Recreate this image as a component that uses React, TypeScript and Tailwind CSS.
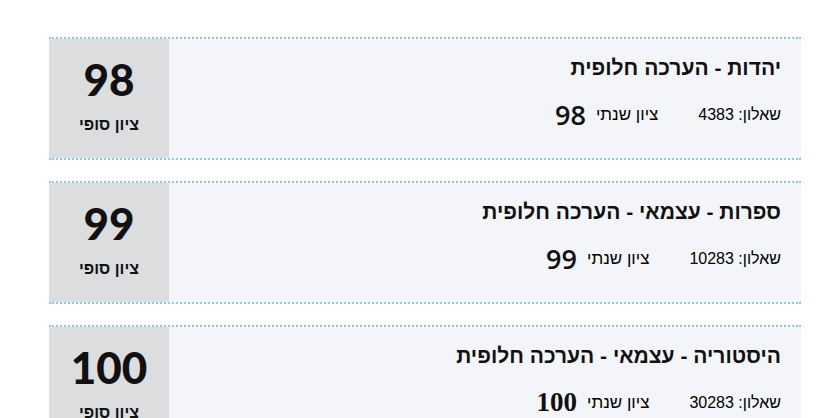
const GRADES = [
  { title: "יהדות - הערכה חלופית", exam: "4383", annual: "98", final: "98", serif: false },
  { title: "ספרות - עצמאי - הערכה חלופית", exam: "10283", annual: "99", final: "99", serif: false },
  { title: "היסטוריה - עצמאי - הערכה חלופית", exam: "30283", annual: "100", final: "100", serif: true },
];

export default function App() {
  return (
    <div
      dir="rtl"
      className="min-h-screen bg-white pt-[37px] pl-[49px] pr-[37px] text-[#111]"
      style={{ fontFamily: '"Liberation Sans", "DejaVu Sans", sans-serif' }}
    >
      <div className="flex flex-col gap-[21px]">
        {GRADES.map((g) => (
          <div
            key={g.exam}
            className="flex h-[123px] border-y-2 border-dotted border-[#8cc8f0] bg-[#f4f5f9]"
          >
            <div className="flex flex-1 flex-col pr-[20px] pt-[16px]">
              <h3 className="text-[21px] font-bold leading-[26px]">{g.title}</h3>
              <div className="mt-[20px] flex items-center gap-[40px]">
                <span className="text-[16px] text-black">שאלון: {g.exam}</span>
                <span className="flex items-center gap-[10px]">
                  <span className="text-[17px] text-black">ציון שנתי</span>
                  <span
                    className={
                      g.serif
                        ? "text-[27px] font-bold leading-none font-['Liberation_Serif']"
                        : "text-[27px] font-semibold leading-none font-['Open_Sans']"
                    }
                  >
                    {g.annual}
                  </span>
                </span>
              </div>
            </div>
            <div className="flex w-[120px] flex-col items-center bg-[#dcdddf] pt-[14px]">
              <span className="font-['Lato'] text-[44px] font-black leading-[52px]">{g.final}</span>
              <span className="mt-[8px] text-[16px] font-bold">ציון סופי</span>
            </div>
          </div>
        ))}
      </div>
    </div>
  );
}
